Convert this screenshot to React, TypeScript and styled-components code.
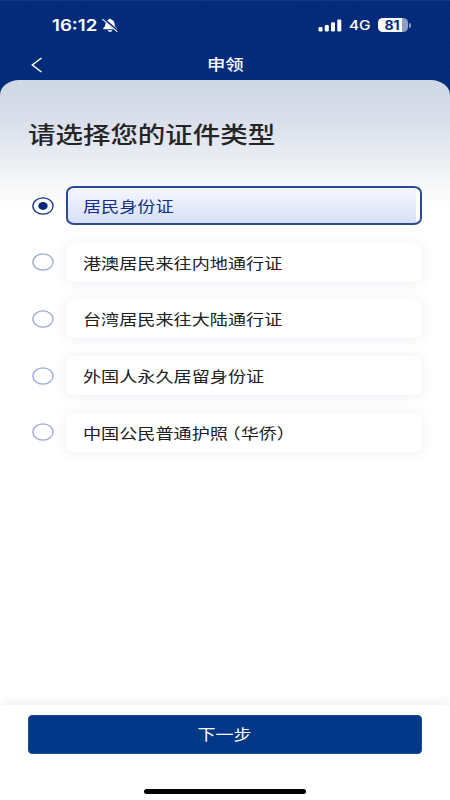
import React, { useState } from "react";
import styled, { createGlobalStyle } from "styled-components";

const GlobalStyle = createGlobalStyle`
  * { box-sizing: border-box; }
  body { margin: 0; background: #fff; font-family: "Noto Sans CJK SC", sans-serif; }
  button { font: inherit; border: 0; padding: 0; background: none; cursor: pointer; }
`;

const Screen = styled.div`
  width: 450px;
  height: 800px;
  overflow: hidden;
  display: flex;
  flex-direction: column;
  background: linear-gradient(#1c3f86 0, #042b7c 1.5px, #042d7e 110px, #fff 110px);
`;

const Wide = styled.span<{ $origin?: string; $x?: number }>`
  display: inline-block;
  white-space: nowrap;
  transform: scaleX(${(p) => p.$x ?? 1.2});
  transform-origin: ${(p) => p.$origin ?? "left"} center;
`;

const Bracketed = styled.span`
  margin-left: -4.5px;
`;

const Header = styled.header`
  flex: none;
  height: 80px;
  color: #fff;
  background: repeating-linear-gradient(145deg, rgba(0, 12, 70, 0.09) 0 1.5px, transparent 1.5px 4px);
`;

const StatusBar = styled.div`
  height: 50px;
  padding: 0 39px 0 52px;
  display: flex;
  align-items: center;
  justify-content: space-between;
  font-family: Inter, sans-serif;
`;

const Clock = styled.div`
  display: flex;
  align-items: center;
  height: 24px;
  font-size: 15.8px;
  font-weight: 600;
  line-height: 25px;
  span { width: 50px; flex: none; }
`;

const Indicators = styled.div`
  display: flex;
  align-items: center;
  height: 24px;
`;

const Network = styled.div`
  width: 21px;
  margin: 2px 8px 0 7px;
  font-size: 12.8px;
  font-weight: 500;
  line-height: 20px;
`;

const Battery = styled.div`
  width: 30px;
  height: 14px;
  padding-right: 1px;
  border-radius: 5px / 4.5px;
  background: linear-gradient(90deg, #fff 24px, #8d9dc4 24px);
  color: #06297a;
  font-size: 13px;
  font-weight: 700;
  line-height: 14px;
  text-align: center;
`;

const BatteryTip = styled.i`
  width: 2px;
  height: 5px;
  margin-left: 1px;
  border-radius: 0 2px 2px 0;
  background: #8d9dc4;
`;

const NavBar = styled.div`
  height: 30px;
  padding: 0 31px;
  display: grid;
  grid-template-columns: 24px 1fr 24px;
  align-items: center;
`;

const Back = styled.button`
  display: flex;
  color: #fff;
`;

const NavTitle = styled.div`
  padding-bottom: 3px;
  text-align: center;
  font-size: 15.3px;
  font-weight: 500;
  line-height: 27px;
`;

const Sheet = styled.main`
  flex: 1;
  padding: 33px 28px 0;
  border-radius: 19px 19px 0 0 / 15px 15px 0 0;
  background: linear-gradient(#ced7e4 0, #d7dde9 32px, #e1e6f0 60px, #edf0f3 85px, #f8f9fa 110px, #fff 132px);
`;

const Title = styled.h1`
  margin: 0 0 32px;
  height: 41px;
  color: #252525;
  font-size: 22.9px;
  font-weight: 500;
  line-height: 41px;
`;

const Options = styled.div`
  display: flex;
  flex-direction: column;
  gap: 17.7px;
`;

const Option = styled.div`
  display: grid;
  grid-template-columns: 38px 1fr;
  align-items: center;
  height: 39px;
  cursor: pointer;
`;

const RadioMark = styled.svg`
  display: block;
  margin-left: 4px;
`;

const Card = styled.div<{ $on: boolean }>`
  height: 39px;
  padding-left: ${(p) => (p.$on ? "14.5px" : "16.5px")};
  border: ${(p) => (p.$on ? "2px solid #2c4a91" : "0")};
  border-radius: 8px / 7px;
  color: ${(p) => (p.$on ? "#132f88" : "#202020")};
  background: ${(p) =>
    p.$on
      ? "linear-gradient(#f4f6ff, #e7ecfc 50%, #d6e0f8) left / calc(100% - 4px) 100% no-repeat, #fff"
      : "#fff"};
  box-shadow: ${(p) => (p.$on ? "none" : "0 1px 12px rgba(55, 80, 150, 0.1)")};
  font-size: 15.1px;
  line-height: ${(p) => (p.$on ? "34px" : "38px")};
`;

const Footer = styled.footer`
  flex: none;
  height: 95px;
  padding: 10px 28px 0;
  display: flex;
  flex-direction: column;
  align-items: center;
  background: #fff;
  box-shadow: 0 -3px 10px rgba(0, 0, 0, 0.06);
`;

const Next = styled.button`
  && {
    width: 394px;
    height: 39px;
    padding-bottom: 2px;
    border: 1px solid #1a4a99;
    border-radius: 4px;
    background: #033889;
    color: #fff;
    font-size: 15px;
    line-height: 35px;
  }
`;

const HomeBar = styled.div`
  width: 162px;
  height: 5px;
  margin-top: 34.5px;
  border-radius: 3px;
  background: #000;
`;

const Radio = ({ on }: { on: boolean }) => (
  <RadioMark width="22" height="18" viewBox="0 0 22 18">
    <ellipse cx="11" cy="9" rx="10.1" ry="8.2" fill="none" stroke={on ? "#10307f" : "#98a8d0"} strokeWidth="1.3" />
    {on && <ellipse cx="11" cy="9" rx="4.7" ry="3.9" fill="#06247a" />}
  </RadioMark>
);

const MutedBell = () => (
  <svg width="16" height="15" viewBox="0 0 16 15" fill="none">
    <path d="M8 .7c-.8 0-1.3.4-1.4 1C4.5 2.3 3.5 3.8 3.4 6c-.1 2-.8 3.100-2 4.100-.5.5-.4 1.200.4 1.200h12.400c.8 0 .9-.7.4-1.200-1.200-1-1.900-2.100-2-4.100-.1-2.200-1.100-3.700-3.200-4.300C9.300 1.100 8.800.7 8 .7Z" fill="#fff" />
    <path d="M5.700 12.200h4.600c-.3 1-1.100 1.600-2.300 1.600s-2-.6-2.300-1.600Z" fill="#fff" />
    <path d="m1.500 1 14 12" stroke="#042b7c" strokeWidth="2.400" />
    <path d="m.7 1.400 14.200 12" stroke="#fff" strokeWidth="1.100" strokeLinecap="round" />
  </svg>
);

const Signal = () => (
  <svg width="24" height="13" viewBox="0 0 24 13" fill="#fff">
    <rect x="0.500" y="8" width="4" height="4.500" rx="1.200" />
    <rect x="6.800" y="6" width="4" height="6.500" rx="1.200" />
    <rect x="13" y="3.300" width="4" height="9.200" rx="1.200" />
    <rect x="19.300" y="0.500" width="4" height="12" rx="1.200" />
  </svg>
);

const documents: { name: string; note?: string }[] = [
  { name: "居民身份证" },
  { name: "港澳居民来往内地通行证" },
  { name: "台湾居民来往大陆通行证" },
  { name: "外国人永久居留身份证" },
  { name: "中国公民普通护照", note: "（华侨）" },
];

export default function App() {
  const [selected, setSelected] = useState(0);
  return (
    <>
      <GlobalStyle />
      <Screen>
        <Header>
          <StatusBar>
            <Clock>
              <span><Wide $x={1.18}>16:12</Wide></span>
              <MutedBell />
            </Clock>
            <Indicators>
              <Signal />
              <Network><Wide>4G</Wide></Network>
              <Battery><Wide $origin="center" $x={1.08}>81</Wide></Battery>
              <BatteryTip />
            </Indicators>
          </StatusBar>
          <NavBar>
            <Back aria-label="返回">
              <svg width="12" height="16" viewBox="0 0 12 16" fill="none" stroke="currentColor" strokeWidth="1.500">
                <path d="M10.500 1 1.300 8l9.200 7" />
              </svg>
            </Back>
            <NavTitle><Wide $origin="center">申领</Wide></NavTitle>
          </NavBar>
        </Header>
        <Sheet>
          <Title><Wide>请选择您的证件类型</Wide></Title>
          <Options role="radiogroup">
            {documents.map(({ name, note }, i) => (
              <Option key={name} role="radio" aria-checked={selected === i} onClick={() => setSelected(i)}>
                <Radio on={selected === i} />
                <Card $on={selected === i}>
                  <Wide>{name}{note && <Bracketed>{note}</Bracketed>}</Wide>
                </Card>
              </Option>
            ))}
          </Options>
        </Sheet>
        <Footer>
          <Next><Wide $origin="center">下一步</Wide></Next>
          <HomeBar />
        </Footer>
      </Screen>
    </>
  );
}
